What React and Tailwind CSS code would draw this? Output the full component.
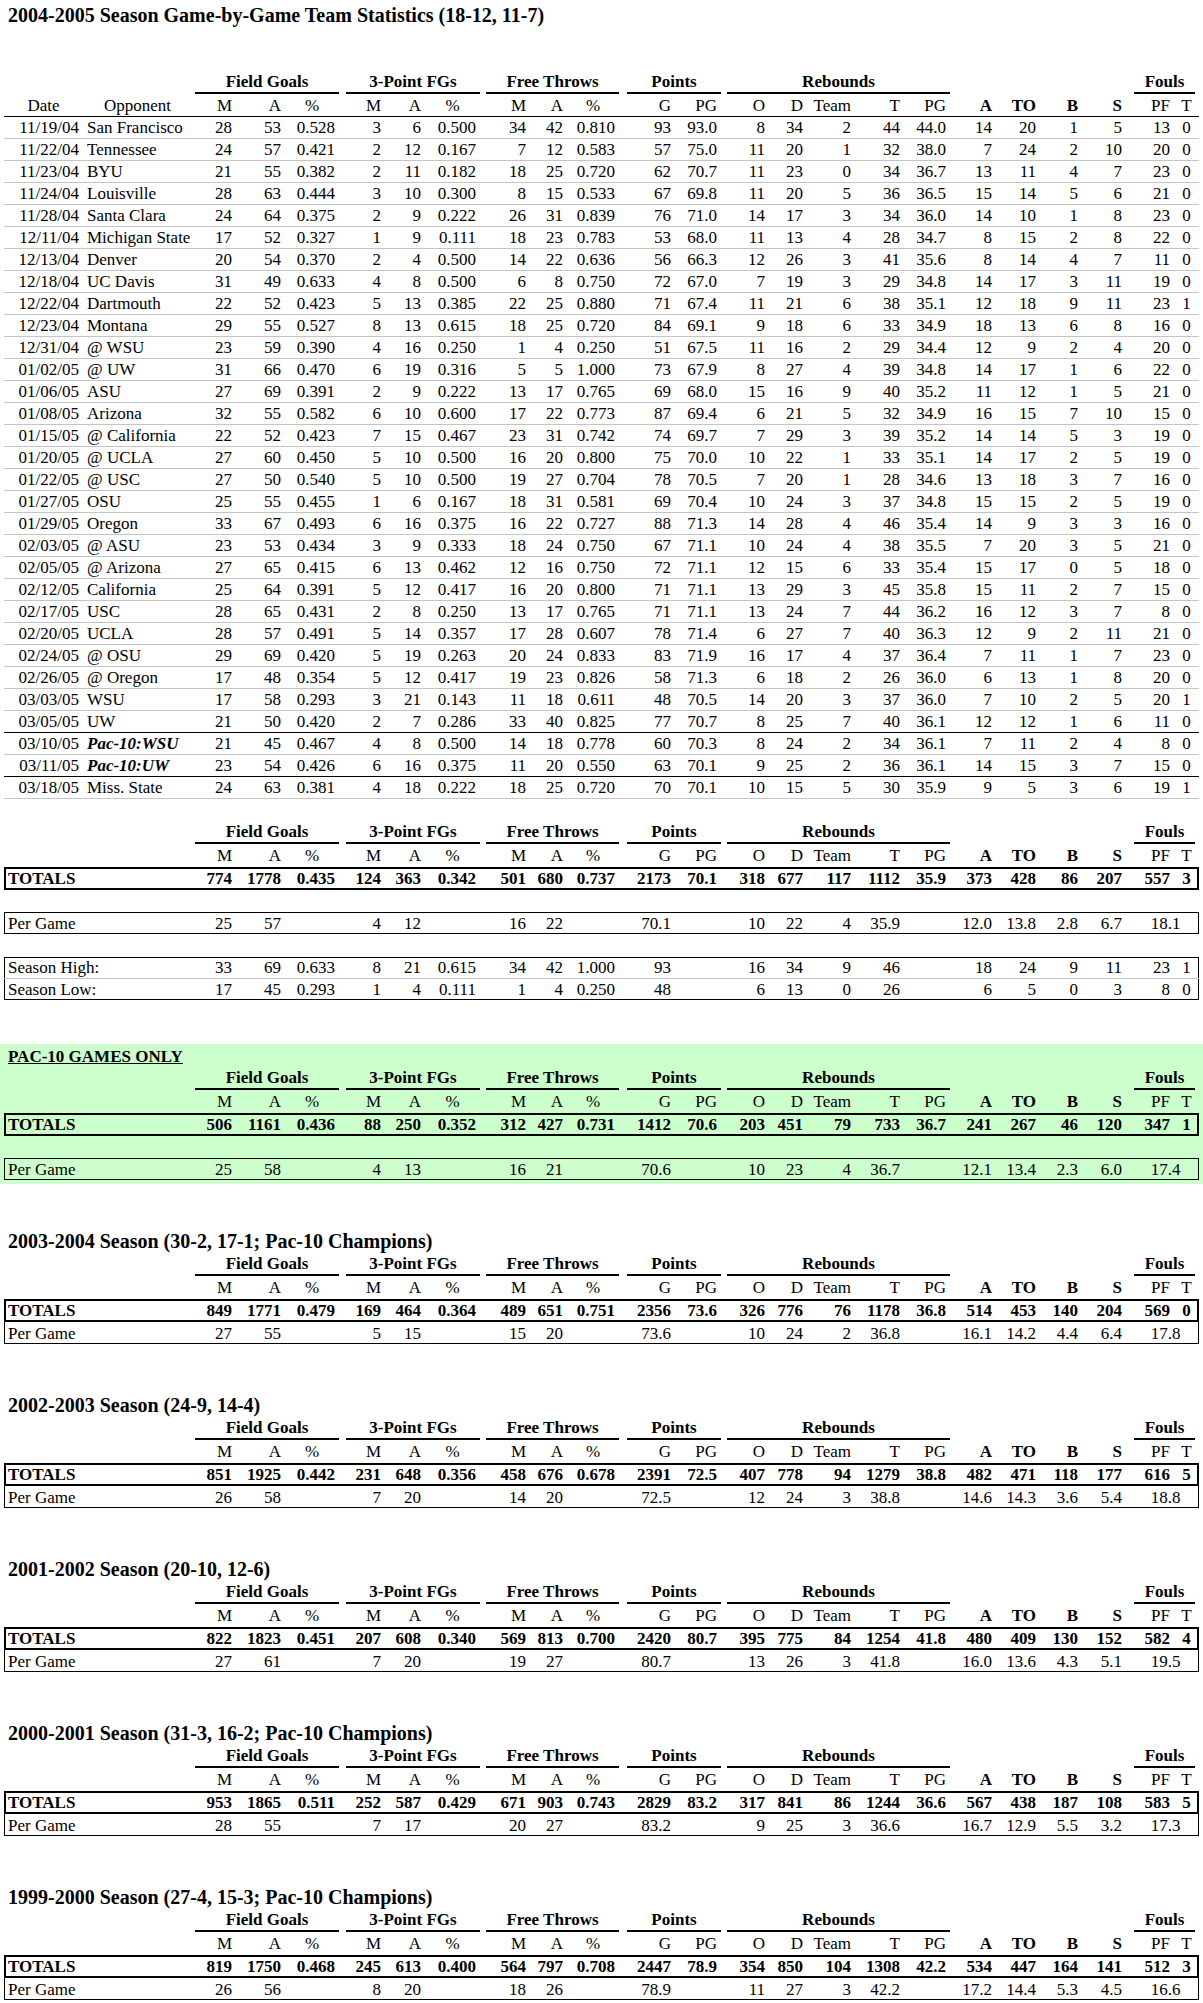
import React from 'react';

// 24 columns: Date, Opponent, FG(M A %), 3P(M A %), FT(M A %), Pts(G PG), Reb(O D Team T PG), A TO B S, PF T
const GRID =
  'grid w-[1195px] grid-cols-[79px_109px_44px_49px_54px_46px_40px_55px_50px_37px_52px_56px_46px_48px_38px_48px_49px_46px_46px_44px_42px_44px_48px_25px]';

const games = [
  ['11/19/04', 'San Francisco', 28, 53, '0.528', 3, 6, '0.500', 34, 42, '0.810', 93, '93.0', 8, 34, 2, 44, '44.0', 14, 20, 1, 5, 13, 0],
  ['11/22/04', 'Tennessee', 24, 57, '0.421', 2, 12, '0.167', 7, 12, '0.583', 57, '75.0', 11, 20, 1, 32, '38.0', 7, 24, 2, 10, 20, 0],
  ['11/23/04', 'BYU', 21, 55, '0.382', 2, 11, '0.182', 18, 25, '0.720', 62, '70.7', 11, 23, 0, 34, '36.7', 13, 11, 4, 7, 23, 0],
  ['11/24/04', 'Louisville', 28, 63, '0.444', 3, 10, '0.300', 8, 15, '0.533', 67, '69.8', 11, 20, 5, 36, '36.5', 15, 14, 5, 6, 21, 0],
  ['11/28/04', 'Santa Clara', 24, 64, '0.375', 2, 9, '0.222', 26, 31, '0.839', 76, '71.0', 14, 17, 3, 34, '36.0', 14, 10, 1, 8, 23, 0],
  ['12/11/04', 'Michigan State', 17, 52, '0.327', 1, 9, '0.111', 18, 23, '0.783', 53, '68.0', 11, 13, 4, 28, '34.7', 8, 15, 2, 8, 22, 0],
  ['12/13/04', 'Denver', 20, 54, '0.370', 2, 4, '0.500', 14, 22, '0.636', 56, '66.3', 12, 26, 3, 41, '35.6', 8, 14, 4, 7, 11, 0],
  ['12/18/04', 'UC Davis', 31, 49, '0.633', 4, 8, '0.500', 6, 8, '0.750', 72, '67.0', 7, 19, 3, 29, '34.8', 14, 17, 3, 11, 19, 0],
  ['12/22/04', 'Dartmouth', 22, 52, '0.423', 5, 13, '0.385', 22, 25, '0.880', 71, '67.4', 11, 21, 6, 38, '35.1', 12, 18, 9, 11, 23, 1],
  ['12/23/04', 'Montana', 29, 55, '0.527', 8, 13, '0.615', 18, 25, '0.720', 84, '69.1', 9, 18, 6, 33, '34.9', 18, 13, 6, 8, 16, 0],
  ['12/31/04', '@ WSU', 23, 59, '0.390', 4, 16, '0.250', 1, 4, '0.250', 51, '67.5', 11, 16, 2, 29, '34.4', 12, 9, 2, 4, 20, 0],
  ['01/02/05', '@ UW', 31, 66, '0.470', 6, 19, '0.316', 5, 5, '1.000', 73, '67.9', 8, 27, 4, 39, '34.8', 14, 17, 1, 6, 22, 0],
  ['01/06/05', 'ASU', 27, 69, '0.391', 2, 9, '0.222', 13, 17, '0.765', 69, '68.0', 15, 16, 9, 40, '35.2', 11, 12, 1, 5, 21, 0],
  ['01/08/05', 'Arizona', 32, 55, '0.582', 6, 10, '0.600', 17, 22, '0.773', 87, '69.4', 6, 21, 5, 32, '34.9', 16, 15, 7, 10, 15, 0],
  ['01/15/05', '@ California', 22, 52, '0.423', 7, 15, '0.467', 23, 31, '0.742', 74, '69.7', 7, 29, 3, 39, '35.2', 14, 14, 5, 3, 19, 0],
  ['01/20/05', '@ UCLA', 27, 60, '0.450', 5, 10, '0.500', 16, 20, '0.800', 75, '70.0', 10, 22, 1, 33, '35.1', 14, 17, 2, 5, 19, 0],
  ['01/22/05', '@ USC', 27, 50, '0.540', 5, 10, '0.500', 19, 27, '0.704', 78, '70.5', 7, 20, 1, 28, '34.6', 13, 18, 3, 7, 16, 0],
  ['01/27/05', 'OSU', 25, 55, '0.455', 1, 6, '0.167', 18, 31, '0.581', 69, '70.4', 10, 24, 3, 37, '34.8', 15, 15, 2, 5, 19, 0],
  ['01/29/05', 'Oregon', 33, 67, '0.493', 6, 16, '0.375', 16, 22, '0.727', 88, '71.3', 14, 28, 4, 46, '35.4', 14, 9, 3, 3, 16, 0],
  ['02/03/05', '@ ASU', 23, 53, '0.434', 3, 9, '0.333', 18, 24, '0.750', 67, '71.1', 10, 24, 4, 38, '35.5', 7, 20, 3, 5, 21, 0],
  ['02/05/05', '@ Arizona', 27, 65, '0.415', 6, 13, '0.462', 12, 16, '0.750', 72, '71.1', 12, 15, 6, 33, '35.4', 15, 17, 0, 5, 18, 0],
  ['02/12/05', 'California', 25, 64, '0.391', 5, 12, '0.417', 16, 20, '0.800', 71, '71.1', 13, 29, 3, 45, '35.8', 15, 11, 2, 7, 15, 0],
  ['02/17/05', 'USC', 28, 65, '0.431', 2, 8, '0.250', 13, 17, '0.765', 71, '71.1', 13, 24, 7, 44, '36.2', 16, 12, 3, 7, 8, 0],
  ['02/20/05', 'UCLA', 28, 57, '0.491', 5, 14, '0.357', 17, 28, '0.607', 78, '71.4', 6, 27, 7, 40, '36.3', 12, 9, 2, 11, 21, 0],
  ['02/24/05', '@ OSU', 29, 69, '0.420', 5, 19, '0.263', 20, 24, '0.833', 83, '71.9', 16, 17, 4, 37, '36.4', 7, 11, 1, 7, 23, 0],
  ['02/26/05', '@ Oregon', 17, 48, '0.354', 5, 12, '0.417', 19, 23, '0.826', 58, '71.3', 6, 18, 2, 26, '36.0', 6, 13, 1, 8, 20, 0],
  ['03/03/05', 'WSU', 17, 58, '0.293', 3, 21, '0.143', 11, 18, '0.611', 48, '70.5', 14, 20, 3, 37, '36.0', 7, 10, 2, 5, 20, 1],
  ['03/05/05', 'UW', 21, 50, '0.420', 2, 7, '0.286', 33, 40, '0.825', 77, '70.7', 8, 25, 7, 40, '36.1', 12, 12, 1, 6, 11, 0],
  ['03/10/05', 'Pac-10:WSU', 21, 45, '0.467', 4, 8, '0.500', 14, 18, '0.778', 60, '70.3', 8, 24, 2, 34, '36.1', 7, 11, 2, 4, 8, 0],
  ['03/11/05', 'Pac-10:UW', 23, 54, '0.426', 6, 16, '0.375', 11, 20, '0.550', 63, '70.1', 9, 25, 2, 36, '36.1', 14, 15, 3, 7, 15, 0],
  ['03/18/05', 'Miss. State', 24, 63, '0.381', 4, 18, '0.222', 18, 25, '0.720', 70, '70.1', 10, 15, 5, 30, '35.9', 9, 5, 3, 6, 19, 1],
];

// rows followed by a black rule instead of the grey one
const darkAfter = ['03/05/05', '03/11/05'];

const seasons = [
  {
    title: '2003-2004 Season (30-2, 17-1; Pac-10 Champions)',
    totals: [849, 1771, '0.479', 169, 464, '0.364', 489, 651, '0.751', 2356, '73.6', 326, 776, 76, 1178, '36.8', 514, 453, 140, 204, 569, 0],
    perGame: [27, 55, '', 5, 15, '', 15, 20, '', '73.6', '', 10, 24, 2, '36.8', '', '16.1', '14.2', '4.4', '6.4', '17.8'],
  },
  {
    title: '2002-2003 Season (24-9, 14-4)',
    totals: [851, 1925, '0.442', 231, 648, '0.356', 458, 676, '0.678', 2391, '72.5', 407, 778, 94, 1279, '38.8', 482, 471, 118, 177, 616, 5],
    perGame: [26, 58, '', 7, 20, '', 14, 20, '', '72.5', '', 12, 24, 3, '38.8', '', '14.6', '14.3', '3.6', '5.4', '18.8'],
  },
  {
    title: '2001-2002 Season (20-10, 12-6)',
    totals: [822, 1823, '0.451', 207, 608, '0.340', 569, 813, '0.700', 2420, '80.7', 395, 775, 84, 1254, '41.8', 480, 409, 130, 152, 582, 4],
    perGame: [27, 61, '', 7, 20, '', 19, 27, '', '80.7', '', 13, 26, 3, '41.8', '', '16.0', '13.6', '4.3', '5.1', '19.5'],
  },
  {
    title: '2000-2001 Season (31-3, 16-2; Pac-10 Champions)',
    totals: [953, 1865, '0.511', 252, 587, '0.429', 671, 903, '0.743', 2829, '83.2', 317, 841, 86, 1244, '36.6', 567, 438, 187, 108, 583, 5],
    perGame: [28, 55, '', 7, 17, '', 20, 27, '', '83.2', '', 9, 25, 3, '36.6', '', '16.7', '12.9', '5.5', '3.2', '17.3'],
  },
  {
    title: '1999-2000 Season (27-4, 15-3; Pac-10 Champions)',
    totals: [819, 1750, '0.468', 245, 613, '0.400', 564, 797, '0.708', 2447, '78.9', 354, 850, 104, 1308, '42.2', 534, 447, 164, 141, 512, 3],
    perGame: [26, 56, '', 8, 20, '', 18, 26, '', '78.9', '', 11, 27, 3, '42.2', '', '17.2', '14.4', '5.3', '4.5', '16.6'],
  },
];

function StatCells({ values }) {
  return values.map((v, i) => (
    <div key={i} className={i === values.length - 1 ? 'text-center' : 'pr-[4px] text-right'}>
      {v}
    </div>
  ));
}

function GroupRow() {
  return (
    <div className={`${GRID} h-[22px] items-end font-bold`}>
      <div className="col-span-2" />
      <div className="col-span-3 ml-[3px] border-b-2 border-black text-center leading-[20px]">Field Goals</div>
      <div className="col-span-3 ml-[7px] border-b-2 border-black text-center leading-[20px]">3-Point FGs</div>
      <div className="col-span-3 ml-[6px] border-b-2 border-black text-center leading-[20px]">Free Throws</div>
      <div className="col-span-2 ml-[8px] border-b-2 border-black text-center leading-[20px]">Points</div>
      <div className="col-span-5 ml-[6px] border-b-2 border-black text-center leading-[20px]">Rebounds</div>
      <div className="col-span-4" />
      <div className="col-span-2 ml-[8px] mr-[4px] border-b-2 border-black text-center leading-[20px]">Fouls</div>
    </div>
  );
}

function SubRow({ withNames, ruled }) {
  return (
    <div className={`${GRID} items-center ${ruled ? 'h-[23px] border-b border-black' : 'h-[23px]'}`}>
      <div className="text-center">{withNames ? 'Date' : ''}</div>
      <div className="text-center">{withNames ? 'Opponent' : ''}</div>
      <div className="pr-[4px] text-right">M</div>
      <div className="pr-[4px] text-right">A</div>
      <div className="text-center">%</div>
      <div className="pr-[4px] text-right">M</div>
      <div className="pr-[4px] text-right">A</div>
      <div className="text-center">%</div>
      <div className="pr-[4px] text-right">M</div>
      <div className="pr-[4px] text-right">A</div>
      <div className="text-center">%</div>
      <div className="pr-[4px] text-right">G</div>
      <div className="pr-[4px] text-right">PG</div>
      <div className="pr-[4px] text-right">O</div>
      <div className="pr-[4px] text-right">D</div>
      <div className="pr-[4px] text-right">Team</div>
      <div className="pr-[4px] text-right">T</div>
      <div className="pr-[4px] text-right">PG</div>
      <div className="pr-[4px] text-right font-bold">A</div>
      <div className="pr-[4px] text-right font-bold">TO</div>
      <div className="pr-[4px] text-right font-bold">B</div>
      <div className="pr-[4px] text-right font-bold">S</div>
      <div className="pr-[4px] text-right">PF</div>
      <div className="text-center">T</div>
    </div>
  );
}

function TotalsRow({ values }) {
  return (
    <div className={`${GRID} h-[23px] items-center font-bold shadow-[inset_0_0_0_2px_#000]`}>
      <div className="col-span-2 pl-[4px]">TOTALS</div>
      <StatCells values={values} />
    </div>
  );
}

function PerGameRow({ values, attached }) {
  const pf = values[values.length - 1];
  return (
    <div
      className={`${GRID} h-[22px] items-center ${
        attached
          ? 'shadow-[inset_1px_0_0_#000,inset_-1px_0_0_#000,inset_0_-1px_0_#000]'
          : 'shadow-[inset_0_0_0_1px_#000]'
      }`}
    >
      <div className="col-span-2 pl-[4px]">Per Game</div>
      {values.slice(0, -1).map((v, i) => (
        <div key={i} className="pr-[4px] text-right">
          {v}
        </div>
      ))}
      <div className="col-span-2 pl-[6px] text-center">{pf}</div>
    </div>
  );
}

function GameRow({ game }) {
  const [date, opp, ...stats] = game;
  const pac = opp.startsWith('Pac-10');
  const dark = darkAfter.includes(date);
  return (
    <div className={`${GRID} h-[22px] items-center border-b ${dark ? 'border-black' : 'border-[#c4c4c4]'}`}>
      <div className="pr-[4px] text-right">{date}</div>
      <div className={`pl-[4px] whitespace-nowrap ${pac ? 'font-bold italic' : ''}`}>{opp}</div>
      <StatCells values={stats} />
    </div>
  );
}

function SeasonBlock({ season, first }) {
  return (
    <div className={first ? 'mt-[46px]' : 'mt-[50px]'}>
      <div className="h-[22px] pl-[4px] text-[20px] font-bold leading-[22px]">{season.title}</div>
      <div className="mt-[2px]">
        <GroupRow />
      </div>
      <SubRow />
      <TotalsRow values={season.totals} />
      <PerGameRow values={season.perGame} attached />
    </div>
  );
}

export default function App() {
  return (
    <div className="min-h-screen w-[1203px] bg-white pb-[4px] font-['Liberation_Serif',serif] text-[17px] leading-[21px] text-black">
      <div className="pl-[4px]">
        <div className="h-[26px] pl-[4px] pt-[4px] text-[20px] font-bold leading-[22px]">
          2004-2005 Season Game-by-Game Team Statistics (18-12, 11-7)
        </div>

        <div className="mt-[46px]">
          <GroupRow />
        </div>
        <SubRow withNames ruled />
        {games.map(g => (
          <GameRow key={g[0]} game={g} />
        ))}

        <div className="mt-[23px]">
          <GroupRow />
        </div>
        <SubRow />
        <TotalsRow
          values={[774, 1778, '0.435', 124, 363, '0.342', 501, 680, '0.737', 2173, '70.1', 318, 677, 117, 1112, '35.9', 373, 428, 86, 207, 557, 3]}
        />
        <div className="mt-[22px]">
          <PerGameRow values={[25, 57, '', 4, 12, '', 16, 22, '', '70.1', '', 10, 22, 4, '35.9', '', '12.0', '13.8', '2.8', '6.7', '18.1']} />
        </div>

        <div className="mt-[23px] w-[1195px] shadow-[inset_0_0_0_1px_#000]">
          <div className={`${GRID} h-[22px] items-center border-b border-[#c4c4c4]`}>
            <div className="col-span-2 pl-[4px]">Season High:</div>
            <StatCells values={[33, 69, '0.633', 8, 21, '0.615', 34, 42, '1.000', 93, '', 16, 34, 9, 46, '', 18, 24, 9, 11, 23, 1]} />
          </div>
          <div className={`${GRID} h-[21px] items-center`}>
            <div className="col-span-2 pl-[4px]">Season Low:</div>
            <StatCells values={[17, 45, '0.293', 1, 4, '0.111', 1, 4, '0.250', 48, '', 6, 13, 0, 26, '', 6, 5, 0, 3, 8, 0]} />
          </div>
        </div>
      </div>

      {/* Pac-10 games block */}
      <div className="mt-[44px] bg-[#ccffcc] pb-[4px] pl-[4px] pt-[2px]">
        <div className="h-[22px] pl-[4px] font-bold underline">PAC-10 GAMES ONLY</div>
        <GroupRow />
        <SubRow />
        <TotalsRow
          values={[506, 1161, '0.436', 88, 250, '0.352', 312, 427, '0.731', 1412, '70.6', 203, 451, 79, 733, '36.7', 241, 267, 46, 120, 347, 1]}
        />
        <div className="mt-[22px]">
          <PerGameRow values={[25, 58, '', 4, 13, '', 16, 21, '', '70.6', '', 10, 23, 4, '36.7', '', '12.1', '13.4', '2.3', '6.0', '17.4']} />
        </div>
      </div>

      <div className="pl-[4px]">
        {seasons.map((s, i) => (
          <SeasonBlock key={s.title} season={s} first={i === 0} />
        ))}
      </div>
    </div>
  );
}
